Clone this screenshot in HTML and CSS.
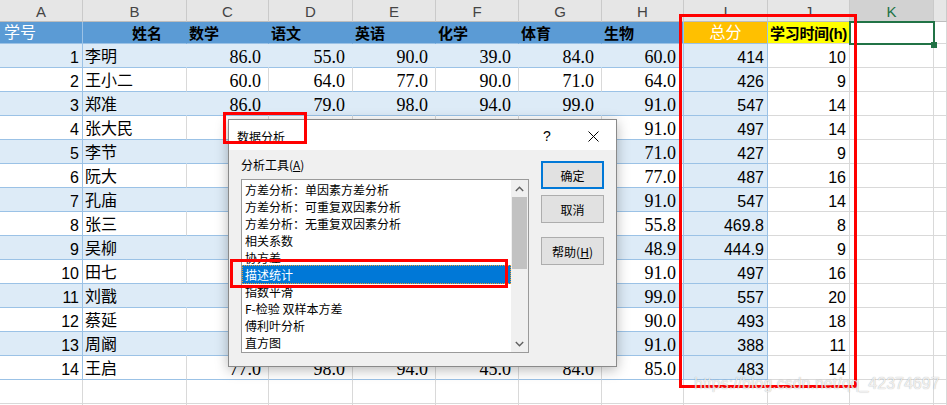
FILE: index.html
```html
<!DOCTYPE html>
<html lang="zh-CN">

<head>
    <meta charset="UTF-8">
    <meta name="viewport" content="width=device-width, initial-scale=1.0">
    <title>数据分析 - 描述统计</title>
    <link rel="stylesheet" href="styles.css">
</head>

<body>
    <div class="sheet">
        <div class="grid" id="grid"></div>

        <!-- 数据分析对话框 -->
        <div class="dialog">
            <div class="dlg-title">
                <span class="dlg-name">数据分析</span>
                <span class="dlg-help">?</span>
                <span class="dlg-close">
                    <svg width="11" height="11" viewBox="0 0 11 11">
                        <path d="M0.5 0.5 L10.5 10.5 M10.5 0.5 L0.5 10.5" stroke="#000" stroke-width="1" fill="none" />
                    </svg>
                </span>
            </div>
            <div class="dlg-body">
                <div class="dlg-left">
                    <div class="dlg-label">分析工具(<u>A</u>)</div>
                    <div class="listbox">
                        <div class="items">
                            <div class="item">方差分析：单因素方差分析</div>
                            <div class="item">方差分析：可重复双因素分析</div>
                            <div class="item">方差分析：无重复双因素分析</div>
                            <div class="item">相关系数</div>
                            <div class="item">协方差</div>
                            <div class="item selected">描述统计</div>
                            <div class="item">指数平滑</div>
                            <div class="item">F-检验 双样本方差</div>
                            <div class="item">傅利叶分析</div>
                            <div class="item">直方图</div>
                        </div>
                        <div class="scroll">
                            <div class="arrow">
                                <svg width="9" height="6" viewBox="0 0 9 6">
                                    <polyline points="0.8,5 4.5,1.3 8.2,5" stroke="#606060" stroke-width="1.4" fill="none" />
                                </svg>
                            </div>
                            <div class="thumb"></div>
                            <div class="track"></div>
                            <div class="arrow">
                                <svg width="9" height="6" viewBox="0 0 9 6">
                                    <polyline points="0.8,1 4.5,4.7 8.2,1" stroke="#606060" stroke-width="1.4" fill="none" />
                                </svg>
                            </div>
                        </div>
                    </div>
                </div>
                <div class="dlg-buttons">
                    <button class="btn btn-default">确定</button>
                    <button class="btn">取消</button>
                    <button class="btn btn-help">帮助(<u>H</u>)</button>
                </div>
            </div>
        </div>

        <!-- 红框标注 -->
        <div class="mark mark-total"></div>
        <div class="mark mark-title"></div>
        <div class="mark mark-item"></div>

        <div class="watermark">https://blog.csdn.net/qq_42374697</div>
    </div>

    <script>
        var grid = document.getElementById('grid');

        var letters = ['A', 'B', 'C', 'D', 'E', 'F', 'G', 'H', 'I', 'J', 'K', ''];
        var subjects = ['数学', '语文', '英语', '化学', '体育', '生物'];

        // null = covered by the dialog in the screenshot
        var data = [
            ['李明', 86, 55, 90, 39, 84, 60, '414', '10'],
            ['王小二', 60, 64, 77, 90, 71, 64, '426', '9'],
            ['郑准', 86, 79, 98, 94, 99, 91, '547', '14'],
            ['张大民', null, null, null, null, null, 91, '497', '14'],
            ['李节', null, null, null, null, null, 71, '427', '9'],
            ['阮大', null, null, null, null, null, 77, '487', '16'],
            ['孔庙', null, null, null, null, null, 91, '547', '14'],
            ['张三', null, null, null, null, null, 55.8, '469.8', '8'],
            ['吴柳', null, null, null, null, null, 48.9, '444.9', '9'],
            ['田七', null, null, null, null, null, 91, '497', '16'],
            ['刘戬', null, null, null, null, null, 99, '557', '20'],
            ['蔡延', null, null, null, null, null, 90, '493', '18'],
            ['周阚', null, null, null, null, null, 91, '388', '11'],
            ['王启', 77, 98, 94, 45, 84, 85, '483', '14']
        ];

        function cell(text, cls) {
            var d = document.createElement('div');
            d.className = 'cell ' + (cls || '');
            d.textContent = text;
            grid.appendChild(d);
        }

        // 列标题
        letters.forEach(function (l) {
            cell(l, 'colhead' + (l === 'K' ? ' sel' : ''));
        });

        // 表头行
        cell('学号', 'tt tt-id col-a');
        cell('姓名', 'tt tt-name');
        subjects.forEach(function (s, i) {
            cell(s, 'tt tt-sub' + (i === 5 ? ' col-h' : ''));
        });
        cell('总分', 'tt-total col-i');
        cell('学习时间(h)', 'tt-hours');
        cell('', 'k1');
        cell('', '');

        // 数据行
        data.forEach(function (row, r) {
            var band = r % 2 === 0 ? ' band' : '';
            cell(String(r + 1), 'idx tb col-a' + band);
            cell(row[0], 'name tb' + band);
            for (var c = 1; c <= 6; c++) {
                var v = row[c] === null ? '' : row[c].toFixed(1);
                cell(v, 'num tb' + band + (c === 6 ? ' col-h' : ''));
            }
            cell(row[7], 'tot tb col-i');
            cell(row[8], 'hrs');
            cell('', '');
            cell('', '');
        });

        // 空行
        for (var i = 0; i < 24; i++) {
            cell('', '');
        }
    </script>
</body>

</html>
```

FILE: styles.css
```css
body {
    margin: 0;
    padding: 0;
    overflow: hidden;
    font-family: "Liberation Sans", "Noto Sans CJK SC", sans-serif;
}

.sheet {
    position: relative;
    width: 947px;
    height: 405px;
    overflow: hidden;
    background-color: #fff;
}

/* 表格 */
.grid {
    display: grid;
    grid-template-columns: 83px 104px 82px 84px 83px 83px 83px 82px 84px 82px 84px 13px;
    grid-template-rows: 22px 22px repeat(16, 24px);
}

.cell {
    box-sizing: border-box;
    border-right: 1px solid #d9d9d9;
    border-bottom: 1px solid #d9d9d9;
    display: flex;
    align-items: flex-end;
    overflow: hidden;
    white-space: nowrap;
    font-size: 16px;
    line-height: 20px;
    color: #000;
}

.colhead {
    justify-content: center;
    align-items: center;
    background-color: #e6e6e6;
    border-right-color: #cacaca;
    border-bottom-color: #bdbdbd;
    font-size: 15px;
    line-height: 20px;
    padding-top: 2px;
    color: #444;
}

.colhead.sel {
    background-color: #d2d2d2;
    color: #217346;
}

/* 表头行 */
.tt {
    background-color: #5b9bd5;
    border-right-color: #5b9bd5;
    border-bottom-color: #9bc2e6;
}

.tt-id {
    color: #fff;
    padding-left: 4px;
}

.tt-name {
    justify-content: flex-end;
    padding-right: 24px;
    font-weight: bold;
    font-size: 15px;
    line-height: 19px;
}

.tt-sub {
    padding-left: 2px;
    font-weight: bold;
    font-size: 15px;
    line-height: 19px;
}

.tt-total {
    justify-content: center;
    background-color: #ffc000;
    border-bottom-color: #9bc2e6;
    color: #fff;
}

.tt-hours {
    padding-left: 2px;
    background-color: #ffff00;
    font-weight: bold;
    font-size: 15px;
    line-height: 19px;
    letter-spacing: -0.3px;
}

.k1 {
    position: relative;
    overflow: visible;
}

.k1::after {
    content: "";
    position: absolute;
    top: -1px;
    left: -1px;
    right: -2px;
    bottom: -2px;
    border: 2px solid #217346;
}

.k1::before {
    content: "";
    position: absolute;
    right: -4px;
    bottom: -5px;
    width: 6px;
    height: 6px;
    background-color: #217346;
    z-index: 1;
}

/* 数据行 */
.band {
    background-color: #ddebf7;
    border-right-color: #ddebf7;
}

.tb {
    border-bottom-color: #9bc2e6;
}

.col-a,
.col-h,
.col-i {
    border-right-color: #9bc2e6;
}

.idx,
.tot,
.hrs {
    justify-content: flex-end;
    padding-right: 3px;
    line-height: 18px;
}

.tot {
    background-color: #ddebf7;
}

.name {
    padding-left: 2px;
}

.num {
    justify-content: flex-end;
    padding-right: 7px;
    font-family: "Liberation Serif", serif;
    font-size: 18px;
    line-height: 19px;
}

/* 对话框 */
.dialog {
    position: absolute;
    left: 228px;
    top: 119px;
    width: 389px;
    height: 248px;
    box-sizing: border-box;
    border: 1px solid #8a8a8a;
    background-color: #f0f0f0;
    box-shadow: 0 3px 12px rgba(0, 0, 0, 0.28);
    font-family: "Noto Sans CJK SC", sans-serif;
    font-size: 12px;
    z-index: 2;
    display: flex;
    flex-direction: column;
}

.dlg-title {
    height: 30px;
    background-color: #fff;
    display: flex;
    align-items: center;
}

.dlg-name {
    flex: 1;
    padding-left: 8px;
    line-height: 17px;
    padding-top: 2px;
}

.dlg-help,
.dlg-close {
    width: 46px;
    height: 30px;
    display: flex;
    align-items: center;
    justify-content: center;
}

.dlg-help {
    font-family: "Liberation Sans", sans-serif;
    font-size: 14px;
    padding-top: 2px;
}

.dlg-close svg {
    margin-top: 2px;
}

.dlg-body {
    flex: 1;
    display: flex;
    gap: 12px;
    padding: 6px 12px 0 12px;
}

.dlg-left {
    width: 288px;
}

.dlg-label {
    line-height: 17px;
    margin-bottom: 6px;
}

.listbox {
    box-sizing: border-box;
    height: 174px;
    border: 1px solid #9a9a9a;
    background-color: #fff;
    display: flex;
}

.items {
    flex: 1;
    padding-top: 1px;
    overflow: hidden;
}

.item {
    height: 17px;
    line-height: 17px;
    padding-left: 3px;
    box-sizing: border-box;
    white-space: nowrap;
}

.item.selected {
    height: 19px;
    margin: -1px 0 -1px 0;
    line-height: 17px;
    background-color: #0078d7;
    color: #fff;
    border: 1px dotted #f0a030;
    padding-left: 2px;
}

.scroll {
    width: 17px;
    background-color: #f0f0f0;
    display: flex;
    flex-direction: column;
}

.arrow {
    height: 17px;
    display: flex;
    align-items: center;
    justify-content: center;
}

.thumb {
    height: 72px;
    margin: 0 1px;
    background-color: #c2c2c2;
}

.track {
    flex: 1;
}

.dlg-buttons {
    width: 63px;
    padding-top: 5px;
    display: flex;
    flex-direction: column;
}

.btn {
    box-sizing: border-box;
    height: 28px;
    margin-bottom: 6px;
    border: 1px solid #adadad;
    background-color: #e1e1e1;
    font-family: "Noto Sans CJK SC", sans-serif;
    font-size: 12px;
    color: #000;
    padding: 0;
}

.btn-default {
    border: 2px solid #0078d7;
}

.btn-help {
    margin-top: 8px;
}

/* 红框 */
.mark {
    position: absolute;
    box-sizing: border-box;
    border: 3px solid #ff0000;
    z-index: 3;
}

.mark-total {
    left: 679px;
    top: 14px;
    width: 178px;
    height: 374px;
}

.mark-title {
    left: 223px;
    top: 112px;
    width: 84px;
    height: 32px;
}

.mark-item {
    left: 230px;
    top: 259px;
    width: 278px;
    height: 29px;
}

.watermark {
    position: absolute;
    left: 694px;
    top: 375px;
    font-family: "Liberation Sans", sans-serif;
    font-size: 16px;
    line-height: 18px;
    color: rgba(255, 255, 255, 0.8);
    text-shadow: 0 0 1px rgba(0, 0, 0, 0.35);
    z-index: 4;
    white-space: nowrap;
}
```
